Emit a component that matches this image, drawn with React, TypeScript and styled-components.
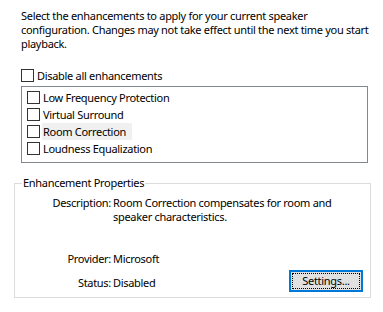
import React from "react";
import styled, { createGlobalStyle } from "styled-components";

const Global = createGlobalStyle`
  html, body { margin: 0; padding: 0; background: #ffffff; }
  body {
    font-family: "Noto Sans", "Open Sans", sans-serif;
    font-size: 11px;
    letter-spacing: -0.3px;
    color: #000000;
  }
`;

const Page = styled.div`
  width: 383px;
  height: 312px;
  box-sizing: border-box;
  padding: 9px 0 0 0;
  display: flex;
  flex-direction: column;
`;

const Intro = styled.p`
  margin: 0 0 0 21px;
  line-height: 14px;
  white-space: nowrap;
`;

const CheckRow = styled.label`
  display: flex;
  align-items: center;
  gap: 3px;
  height: 13px;
  margin: 18px 0 0 21px;
`;

const Box = styled.span`
  width: 13px;
  height: 13px;
  box-sizing: border-box;
  border: 1px solid #333333;
  background: #ffffff;
  flex: none;
`;

const ListBox = styled.div`
  margin: 4px 0 0 21px;
  width: 347px;
  height: 77px;
  box-sizing: border-box;
  border: 1px solid #828790;
  background: #ffffff;
  padding: 2px 0 0 5px;
  display: flex;
  flex-direction: column;
`;

const ListRow = styled.div`
  display: flex;
  align-items: center;
  gap: 2px;
  height: 17px;
`;

const ItemLabel = styled.span<{ $hot?: boolean }>`
  padding: 0 6px 0 1px;
  line-height: 17px;
  background: ${(p) => (p.$hot ? "#f0f0f0" : "transparent")};
`;

const Group = styled.fieldset`
  margin: 13px 0 0 14px;
  width: 357px;
  height: 122px;
  box-sizing: border-box;
  border: 1px solid #dcdcdc;
  padding: 0 7px 4px 0;
`;

const Legend = styled.legend`
  margin-left: 7px;
  padding: 0 1px;
  line-height: 14px;
`;

const PropRow = styled.div`
  display: grid;
  grid-template-columns: 96px auto;
  column-gap: 2px;
  line-height: 14px;
  white-space: nowrap;
`;

const Description = styled(PropRow)`
  margin-top: 6px;
`;

const PropLabel = styled.span`
  text-align: right;
`;

const Footer = styled.div`
  margin-top: 28px;
  display: flex;
  align-items: flex-end;
  justify-content: space-between;
`;

const FooterRows = styled.div`
  display: flex;
  flex-direction: column;
  gap: 10px;
  padding-bottom: 2px;
`;

const Button = styled.button`
  width: 74px;
  height: 22px;
  box-sizing: border-box;
  border: 2px solid #0078d7;
  background: #e1e1e1;
  padding: 1px;
  font: inherit;
  letter-spacing: inherit;
  color: #000;
  display: flex;
`;

const Focus = styled.span`
  flex: 1;
  border: 1px dotted #000;
  display: flex;
  align-items: center;
  justify-content: center;
  line-height: 14px;
`;

const items = [
  "Low Frequency Protection",
  "Virtual Surround",
  "Room Correction",
  "Loudness Equalization",
];

export default function App() {
  return (
    <>
      <Global />
      <Page>
        <Intro>
          Select the enhancements to apply for your current speaker
          <br />
          configuration. Changes may not take effect until the next time you start
          <br />
          playback.
        </Intro>
        <CheckRow>
          <Box />
          <span>Disable all enhancements</span>
        </CheckRow>
        <ListBox>
          {items.map((t) => (
            <ListRow key={t}>
              <Box />
              <ItemLabel $hot={t === "Room Correction"}>{t}</ItemLabel>
            </ListRow>
          ))}
        </ListBox>
        <Group>
          <Legend>Enhancement Properties</Legend>
          <Description>
            <PropLabel>Description:</PropLabel>
            <span>
              Room Correction compensates for room and
              <br />
              speaker characteristics.
            </span>
          </Description>
          <Footer>
            <FooterRows>
              <PropRow>
                <PropLabel>Provider:</PropLabel>
                <span>Microsoft</span>
              </PropRow>
              <PropRow>
                <PropLabel>Status:</PropLabel>
                <span>Disabled</span>
              </PropRow>
            </FooterRows>
            <Button>
              <Focus>Settings...</Focus>
            </Button>
          </Footer>
        </Group>
      </Page>
    </>
  );
}
